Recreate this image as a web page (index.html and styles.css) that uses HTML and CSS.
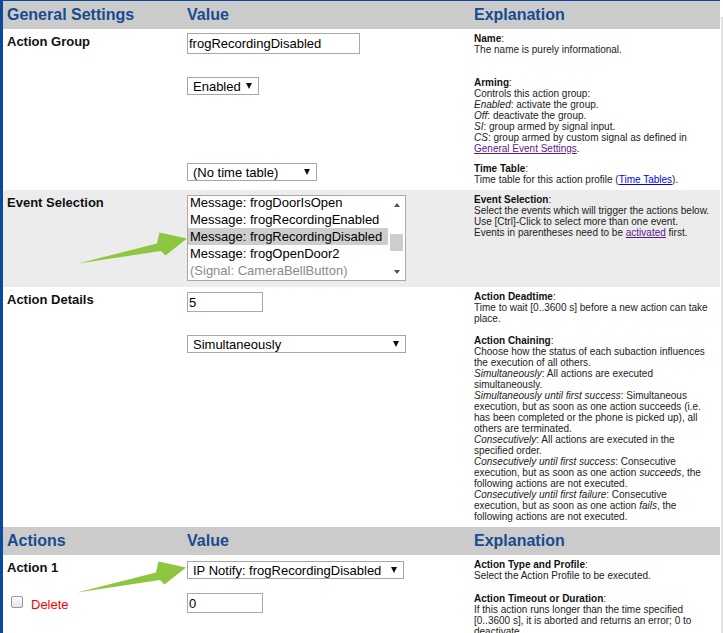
FILE: index.html
```html
<!DOCTYPE html>
<html lang="en">
<head>
  <meta charset="UTF-8" />
  <title>Action Group Settings</title>
  <link rel="stylesheet" href="styles.css">
</head>
<body>
  <div class="screen">
    <div class="page">
      <table class="settings">
        <colgroup>
          <col class="c-label"><col class="c-value"><col class="c-exp">
        </colgroup>

        <tr class="head">
          <th>General Settings</th><th>Value</th><th>Explanation</th>
        </tr>

        <tr class="r-ag1">
          <td class="label">Action Group</td>
          <td><input class="text w-name" type="text" value="frogRecordingDisabled"></td>
          <td class="exp"><b>Name</b>:<br>The name is purely informational.</td>
        </tr>
        <tr class="r-ag2">
          <td></td>
          <td>
            <span class="select w-arm"><select><option>Enabled</option></select></span>
          </td>
          <td class="exp">
            <b>Arming</b>:<br>Controls this action group:<br>
            <i>Enabled</i>: activate the group.<br>
            <i>Off</i>: deactivate the group.<br>
            <i>SI</i>: group armed by signal input.<br>
            <i>CS</i>: group armed by custom signal as defined in <a href="#" class="visited">General Event Settings</a>.
          </td>
        </tr>
        <tr class="r-ag3">
          <td></td>
          <td>
            <span class="select w-time"><select><option>(No time table)</option></select></span>
          </td>
          <td class="exp"><b>Time Table</b>:<br>Time table for this action profile (<a href="#">Time Tables</a>).</td>
        </tr>

        <tr class="r-es shade">
          <td class="label">Event Selection</td>
          <td>
            <div class="listbox">
              <div class="options">
                <div class="options-inner">
                  <div class="option">Message: frogDoorIsOpen</div>
                  <div class="option">Message: frogRecordingEnabled</div>
                  <div class="option selected">Message: frogRecordingDisabled</div>
                  <div class="option">Message: frogOpenDoor2</div>
                  <div class="option muted">(Signal: CameraBellButton)</div>
                </div>
              </div>
              <div class="scrollbar">
                <div class="sb-btn"><span class="tri-up"></span></div>
                <div class="sb-track"><div class="sb-thumb"></div></div>
                <div class="sb-btn"><span class="tri-down"></span></div>
              </div>
            </div>
          </td>
          <td class="exp">
            <b>Event Selection</b>:<br>
            Select the events which will trigger the actions below.<br>
            Use [Ctrl]-Click to select more than one event.<br>
            Events in parentheses need to be <a href="#" class="visited">activated</a> first.
          </td>
        </tr>

        <tr class="r-ad1">
          <td class="label">Action Details</td>
          <td><input class="text w-num" type="text" value="5"></td>
          <td class="exp"><b>Action Deadtime</b>:<br>Time to wait [0..3600 s] before a new action can take place.</td>
        </tr>
        <tr class="r-ad2">
          <td></td>
          <td>
            <span class="select w-wide"><select><option>Simultaneously</option></select></span>
          </td>
          <td class="exp">
            <b>Action Chaining</b>:<br>
            Choose how the status of each subaction influences the execution of all others.<br>
            <i>Simultaneously</i>: All actions are executed simultaneously.<br>
            <i>Simultaneously until first success</i>: Simultaneous execution, but as soon as one action succeeds (i.e. has been completed or the phone is picked up), all others are terminated.<br>
            <i>Consecutively</i>: All actions are executed in the specified order.<br>
            <i>Consecutively until first success</i>: Consecutive execution, but as soon as one action <i>succeeds</i>, the following actions are not executed.<br>
            <i>Consecutively until first failure</i>: Consecutive execution, but as soon as one action <i>fails</i>, the following actions are not executed.
          </td>
        </tr>

        <tr class="head">
          <th>Actions</th><th>Value</th><th>Explanation</th>
        </tr>

        <tr class="r-a1">
          <td class="label">Action 1</td>
          <td>
            <span class="select w-action"><select><option>IP Notify: frogRecordingDisabled</option></select></span>
          </td>
          <td class="exp"><b>Action Type and Profile</b>:<br>Select the Action Profile to be executed.</td>
        </tr>
        <tr class="r-del">
          <td>
            <label class="delete"><input type="checkbox" class="check"><span>Delete</span></label>
          </td>
          <td><input class="text w-num" type="text" value="0"></td>
          <td class="exp"><b>Action Timeout or Duration</b>:<br>If this action runs longer than the time specified [0..3600 s], it is aborted and returns an error; 0 to deactivate.</td>
        </tr>
      </table>

      <!-- callout arrows drawn over the form -->
      <svg class="arrow arrow-event" viewBox="76 230 114 38" width="114" height="38">
        <polygon points="78,263.5 157,243.5 159.5,232.5 187,238.5 165.5,255.5 161,251" />
      </svg>
      <svg class="arrow arrow-action" viewBox="76 230 114 38" width="114" height="38">
        <polygon points="78,263.5 157,243.5 159.5,232.5 187,238.5 165.5,255.5 161,251" />
      </svg>
    </div>
    <div class="gutter"><div class="rail"></div></div>
  </div>
</body>
</html>
```

FILE: styles.css
```css
html, body {
  margin: 0; padding: 0; overflow: hidden;
  font-family: "Liberation Sans", Arial, sans-serif;
  background: #fff; color: #111;
}
.screen { display: flex; height: 633px; overflow: hidden; }
.page {
  position: relative; width: 717px;
  border-left: 3px solid #0b4a9a; border-top: 1px solid #0b4a9a;
}
.gutter { width: 3px; padding-top: 17px; }
.rail { margin-left: 1px; width: 2px; height: 100%; background: #e2e2e2; }

.settings { width: 717px; border-collapse: collapse; table-layout: fixed; }
.c-label { width: 180px; }
.c-value { width: 287px; }
.c-exp { width: 250px; }

.settings th {
  height: 28px; padding: 0 4px; background: #cbcbcb;
  color: #174b8f; font-size: 16px; font-weight: 700;
  text-align: left; vertical-align: middle;
}
.settings td { padding: 4px 4px 5px; vertical-align: top; }
.shade td { background: #ececec; }

.r-ag1 { height: 44px; }
.r-ag2 { height: 86px; }
.r-ag3 { height: 31px; }
.r-es { height: 97px; }
.r-ad1 { height: 44px; }
.r-ad2 { height: 196px; }
.r-a1 { height: 34px; }

.label { font-size: 13px; font-weight: 700; line-height: 17px; color: #111; }

.settings td.exp { padding: 4px 8px 5px 4px; }
.exp { font-size: 10px; line-height: 11px; color: #222; }
.exp b { color: #111; }
.exp a { color: #0000ee; }
.exp a.visited { color: #5b1a8b; }

/* inputs */
.text {
  display: block; box-sizing: border-box; height: 21px; margin: 0;
  border: 1px solid #a9a9a9; padding: 0 1px;
  font-family: inherit; font-size: 13px; color: #000; background: #fff;
}
.w-name { width: 173px; }
.w-num { width: 76px; height: 20px; }
.r-ad1 .w-num { margin-top: 1px; }

/* selects */
.select { position: relative; display: block; }
.select select {
  -webkit-appearance: none; appearance: none;
  display: block; box-sizing: border-box; width: 100%; height: 18px; margin: 0;
  border: 1px solid #a6a6a6; border-radius: 0; background: #fff;
  padding: 0 0 0 5px; font-family: inherit; font-size: 13px; color: #000;
}
.select::after {
  content: ""; position: absolute; right: 7px; top: 6px;
  border-left: 3px solid transparent; border-right: 3px solid transparent;
  border-top: 6px solid #111; pointer-events: none;
}
.w-arm { width: 72px; }
.w-time { width: 130px; }
.w-wide { width: 219px; }
.w-action { width: 217px; margin-top: 2px; }

/* listbox */
.listbox {
  display: flex; box-sizing: border-box; width: 219px; height: 86px; margin-top: 1px;
  border: 1px solid #a9a9a9; background: #fff;
}
.options { flex: 1; overflow: hidden; font-size: 13px; color: #000; }
.options-inner { margin-top: -2px; }
.option { height: 17px; line-height: 17px; padding-left: 2px; white-space: nowrap; }
.option.selected { background: #cdcdcd; }
.option.muted { color: #8a8a8a; }
.scrollbar { width: 17px; display: flex; flex-direction: column; align-items: center; }
.sb-btn { height: 17px; width: 17px; display: flex; align-items: center; justify-content: center; }
.sb-track { flex: 1; }
.sb-thumb { margin-top: 21px; width: 13px; height: 17px; background: #cdcdcd; }
.tri-up {
  border-left: 3.5px solid transparent; border-right: 3.5px solid transparent;
  border-bottom: 4px solid #505050;
}
.tri-down {
  border-left: 3.5px solid transparent; border-right: 3.5px solid transparent;
  border-top: 4px solid #505050;
}

/* delete checkbox */
.delete { display: flex; align-items: flex-start; gap: 8px; font-size: 13px; line-height: 17px; color: #f00; }
.delete span { margin-top: 3px; }
.check {
  -webkit-appearance: none; appearance: none; box-sizing: border-box;
  width: 12px; height: 12px; margin: 3px 0 0 4px;
  border: 1px solid #9a9a9a; border-radius: 2px;
  background: linear-gradient(#fdfdfd, #e4e4e4);
}

/* green callout arrows */
.arrow { position: absolute; fill: #8dc641; }
.arrow-event { left: 73px; top: 229px; }
.arrow-action { left: 72px; top: 558px; }
```
